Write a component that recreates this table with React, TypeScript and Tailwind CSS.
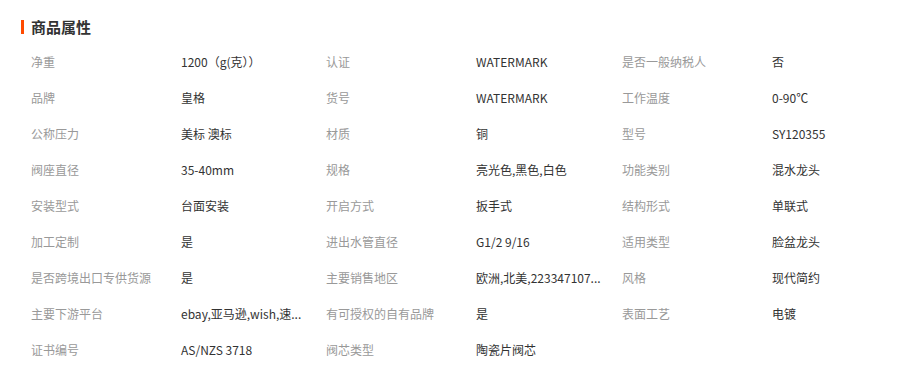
const rows: [string, string, string, string, string, string][] = [
  ["净重", "1200（g(克））", "认证", "WATERMARK", "是否一般纳税人", "否"],
  ["品牌", "皇格", "货号", "WATERMARK", "工作温度", "0-90℃"],
  ["公称压力", "美标 澳标", "材质", "铜", "型号", "SY120355"],
  ["阀座直径", "35-40mm", "规格", "亮光色,黑色,白色", "功能类别", "混水龙头"],
  ["安装型式", "台面安装", "开启方式", "扳手式", "结构形式", "单联式"],
  ["加工定制", "是", "进出水管直径", "G1/2 9/16", "适用类型", "脸盆龙头"],
  ["是否跨境出口专供货源", "是", "主要销售地区", "欧洲,北美,223347107...", "风格", "现代简约"],
  ["主要下游平台", "ebay,亚马逊,wish,速...", "有可授权的自有品牌", "是", "表面工艺", "电镀"],
  ["证书编号", "AS/NZS 3718", "阀芯类型", "陶瓷片阀芯", "", ""],
];

function Cell({ text, label }: { text: string; label?: boolean }) {
  return (
    <div
      className={
        label
          ? "whitespace-nowrap text-[#999999]"
          : "whitespace-nowrap text-[#333333]"
      }
    >
      {text}
    </div>
  );
}

export default function App() {
  return (
    <div className="h-[385px] w-[904px] bg-white font-['Noto_Sans_CJK_SC','Noto_Sans',sans-serif] text-[12px]">
      <div className="mt-[16px] flex h-[22px] items-center pl-[21px]">
        <span className="h-[14px] w-[3px] bg-[#ff4a00]" />
        <h2 className="ml-[7px] text-[15px] font-bold leading-[22px] text-[#333333]">
          商品属性
        </h2>
      </div>
      <div className="mt-[6px] pl-[31px]">
        {rows.map((row, i) => (
          <div
            key={i}
            className="grid h-9 grid-cols-[150px_145px_150px_146px_150px_1fr] items-center leading-[18px]"
          >
            <Cell text={row[0]} label />
            <Cell text={row[1]} />
            <Cell text={row[2]} label />
            <Cell text={row[3]} />
            <Cell text={row[4]} label />
            <Cell text={row[5]} />
          </div>
        ))}
      </div>
    </div>
  );
}
